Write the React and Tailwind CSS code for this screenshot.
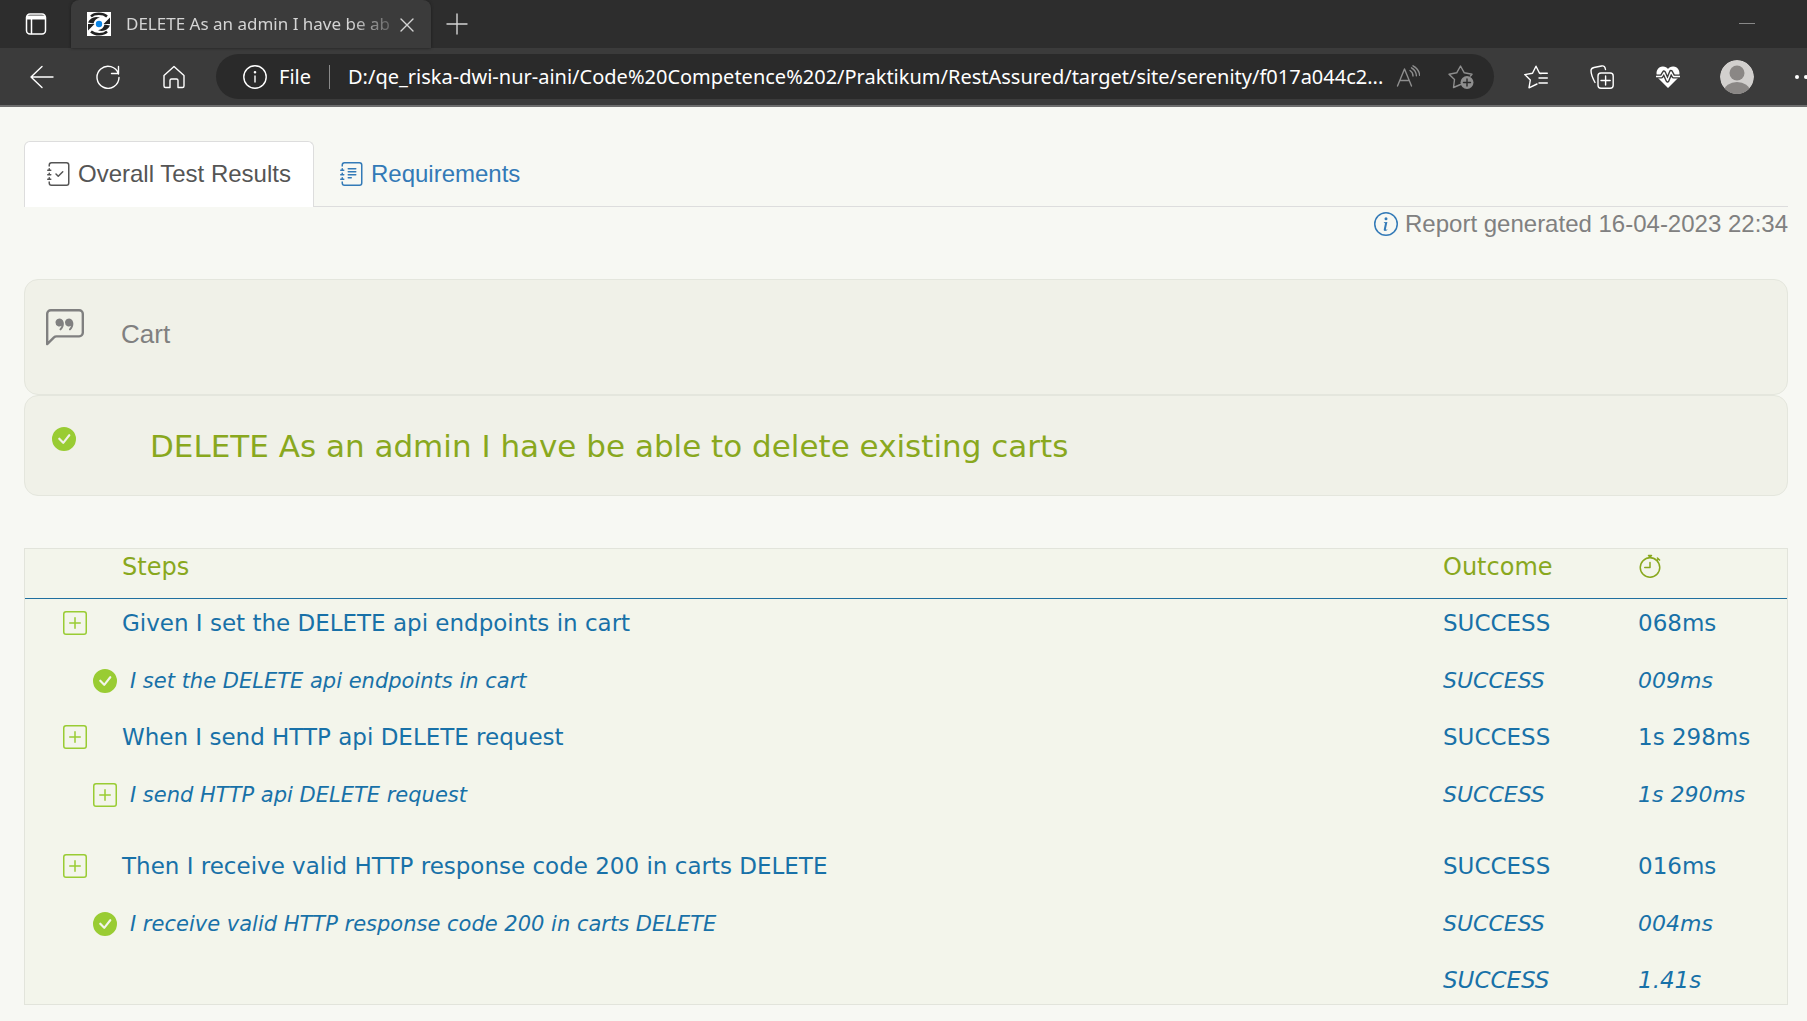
import React from "react";
import {
  BsJournalCheck,
  BsJournalText,
  BsInfoCircle,
  BsChatLeftQuote,
  BsCheckCircleFill,
  BsPlusSquare,
  BsStopwatch,
} from "react-icons/bs";

const steps = [
  { icon: "plus", text: "Given I set the DELETE api endpoints in cart", time: "068ms", height: "h-[58px]" },
  { icon: "check", nested: true, text: "I set the DELETE api endpoints in cart", time: "009ms", height: "h-[56px]" },
  { icon: "plus", text: "When I send HTTP api DELETE request", time: "1s 298ms", height: "h-[58px]" },
  { icon: "plus", nested: true, text: "I send HTTP api DELETE request", time: "1s 290ms", height: "h-[71px]" },
  { icon: "plus", text: "Then I receive valid HTTP response code 200 in carts DELETE", time: "016ms", height: "h-[58px]" },
  { icon: "check", nested: true, text: "I receive valid HTTP response code 200 in carts DELETE", time: "004ms", height: "h-[56px]" },
];

function Line({ children, className = "size-6", width = 1.4, ...rest }) {
  return (
    <svg
      viewBox="0 0 24 24"
      className={className}
      fill="none"
      stroke="currentColor"
      strokeWidth={width}
      strokeLinecap="round"
      strokeLinejoin="round"
      aria-hidden="true"
      {...rest}
    >
      {children}
    </svg>
  );
}

function Favicon() {
  return (
    <svg viewBox="0 0 24 24" className="size-6 shrink-0" aria-hidden="true">
      <rect width="24" height="24" fill="#fff" />
      <path d="M4 4.500C7.500 .8 16 .8 20 4.500" fill="none" stroke="#222" strokeWidth="2.400" />
      <path d="M20 19.500C16.500 23.200 8 23.200 4 19.500" fill="none" stroke="#222" strokeWidth="2.400" />
      <path d="M1 10.500C3 6 8 3.800 13 5.800C9.500 6.300 7.500 8 6.500 11.500z" fill="#222" />
      <path d="M23 13.500C21 18 16 20.200 11 18.200C14.500 17.700 16.500 16 17.500 12.500z" fill="#222" />
      <path d="M23 5.500V12h-6.500zM1 18.500V12h6.500z" fill="#222" />
      <circle cx="12" cy="12" r="3.200" fill="#0b84e5" />
    </svg>
  );
}

function StatusIcon({ kind }) {
  if (kind === "check") return <BsCheckCircleFill className="size-6 shrink-0 text-[#99cc33]" title="Success" />;
  return (
    <button type="button" aria-label="Expand step" className="block shrink-0 text-[#99cc33]">
      <BsPlusSquare className="size-6" />
    </button>
  );
}

function TabStrip() {
  return (
    <div className="flex h-12 items-stretch bg-[#2d2d2d] text-[#d4d4d4]">
      <button type="button" aria-label="Tab actions" className="flex w-[71px] shrink-0 items-center justify-center text-white">
        <Line width={1.5}>
          <rect x="2.500" y="2" width="19" height="20" rx="3.500" />
          <path d="M3 3.500h18V7.500H3z" fill="currentColor" stroke="none" />
          <path d="M7.500 7.500v14" />
        </Line>
      </button>
      <div className="flex w-[360px] shrink-0 items-center rounded-t-lg bg-[#3b3b3b] pl-4 pr-3 shadow-[0_0_3px_#1c1c1c]">
        <Favicon />
        <span className="ml-[15px] whitespace-nowrap text-[17px] leading-6 [mask-image:linear-gradient(to_right,#000_85%,#0004)]">
          DELETE As an admin I have be ab
        </span>
        <button type="button" aria-label="Close tab" className="ml-auto">
          <Line>
            <path d="M6 7l12 12M18 7L6 19" />
          </Line>
        </button>
      </div>
      <button type="button" aria-label="New tab" className="flex w-13 items-center justify-center">
        <Line>
          <path d="M2 12h20M12 2v20" />
        </Line>
      </button>
      <button type="button" aria-label="Minimize" className="ml-auto mr-[52px] flex items-center">
        <svg viewBox="0 0 16 2" className="h-0.5 w-4" aria-hidden="true">
          <path d="M0 .5h16" stroke="#888" />
        </svg>
      </button>
    </div>
  );
}

function Toolbar() {
  return (
    <div className="flex h-[59px] items-center overflow-hidden border-b-2 border-[#6d6d6d] bg-[#3b3b3b] pl-[30px] text-white">
      <nav aria-label="Browser" className="mr-[30px] flex shrink-0 items-center gap-[42px]">
        <button type="button" aria-label="Back">
          <Line>
            <path d="M23 12H1M12 1.500L1 12l11 10.500" />
          </Line>
        </button>
        <button type="button" aria-label="Refresh">
          <Line>
            <path d="M22.500 9A11 11 0 1 0 23 12.500M22.500 1.500v7h-7" />
          </Line>
        </button>
        <button type="button" aria-label="Home">
          <Line>
            <path d="M2 10.500L12 1.500l10 9V21a1.500 1.500 0 0 1-1.500 1.500H16V15.500a1.500 1.500 0 0 0-1.500-1.500h-5A1.500 1.500 0 0 0 8 15.500v7H3.500A1.500 1.500 0 0 1 2 21z" />
          </Line>
        </button>
      </nav>
      <div className="flex h-[45px] min-w-0 flex-1 items-center rounded-full bg-[#2a2a2a] pl-[27px] pr-5">
        <Line className="size-6 shrink-0">
          <circle cx="12" cy="12" r="11.200" />
          <path d="M12 11v6" />
          <circle cx="12" cy="7.300" r=".6" fill="currentColor" />
        </Line>
        <span className="ml-3 text-[20px] leading-6">File</span>
        <span className="mx-[18px] h-6 w-px shrink-0 bg-[#8a8a8a]" />
        <input
          aria-label="Address"
          readOnly
          value="D:/qe_riska-dwi-nur-aini/Code%20Competence%202/Praktikum/RestAssured/target/site/serenity/f017a044c2..."
          className="min-w-0 flex-1 bg-transparent text-[20px] leading-6 outline-none"
        />
        <div className="ml-2 flex shrink-0 items-center gap-[28px] text-[#8e8e8e]">
          <button type="button" aria-label="Read aloud">
            <Line>
              <path d="M1.500 21L8.500 4L15.500 21M4 15.500h9M14 5.500c2 1.200 3 3 3 5.500M15.500 2.800c3 1.700 4.700 4.200 4.900 8M17 .8c3.800 2 6.300 5 6.600 9.500" />
            </Line>
          </button>
          <button type="button" aria-label="Add to favorites">
            <Line className="h-6 w-[26px]" viewBox="0 0 26 24">
              <path d="M12.500 19.500L5.500 22.500L6.500 14.500L1 9.200L8.700 7.800L12.500 1L16.300 7.800L24 9.200L22.500 11" />
              <circle cx="19" cy="17.500" r="6.500" fill="currentColor" stroke="none" />
              <path d="M19 14v7M15.500 17.500h7" stroke="#2a2a2a" />
            </Line>
          </button>
        </div>
      </div>
      <div className="-mr-[11px] ml-[30px] flex shrink-0 items-center gap-[42px]">
        <button type="button" aria-label="Favorites">
          <Line>
            <path d="M13 19L5 22.800L6.300 15L.8 9.600L8.500 8.300L12 1.200L15.500 8.300L17 8.600M16 8.300h7.300M15 13h8.300M15 18h8.300" />
          </Line>
        </button>
        <button type="button" aria-label="Collections">
          <Line>
            <rect x="8" y="8" width="15.200" height="15.200" rx="3" />
            <path d="M15.600 11v9M11 15.500h9.200M5 17.500C2 12 1 8 1 5.500C1 3.500 2 3 4 2.500L11.500 1C14 .5 15 1.500 15.500 4.500" />
          </Line>
        </button>
        <button type="button" aria-label="Browser essentials">
          <Line>
            <path d="M12 23L1.500 12.500C-.5 9 .3 2 6.500 1.500C9 1.300 11 2.500 12 4C13 2.500 15 1.300 17.500 1.500C23.700 2 24.500 9 22.500 12.500z" fill="currentColor" stroke="none" />
            <path d="M-1 11.500h6.500L8 7.500l3.500 8L15 7l2.500 4.500H25" stroke="#3b3b3b" strokeWidth="4.200" />
            <path d="M0 11.500h5.500L8 7.500l3.500 8L15 7l2.500 4.500H24" />
          </Line>
        </button>
        <button type="button" aria-label="Profile" className="-mx-0.5">
          <svg viewBox="0 0 34 34" className="size-[34px] rounded-full" aria-hidden="true">
            <circle cx="17" cy="17" r="17" fill="#d2d0ce" />
            <circle cx="17" cy="13" r="7.500" fill="#8a8785" />
            <ellipse cx="17" cy="31" rx="13" ry="9" fill="#8a8785" />
          </svg>
        </button>
        <button type="button" aria-label="Settings and more">
          <svg viewBox="0 0 24 24" className="size-6" fill="currentColor" aria-hidden="true">
            <circle cx="3" cy="12" r="2" />
            <circle cx="12" cy="12" r="2" />
            <circle cx="21" cy="12" r="2" />
          </svg>
        </button>
      </div>
    </div>
  );
}

export default function App() {
  return (
    <div className="min-h-screen bg-[#f7f8f3]">
      <header className="font-['Noto_Sans','Open_Sans',sans-serif]">
        <TabStrip />
        <Toolbar />
      </header>

      <main className="pl-6 pr-[19px] pt-[34px] font-['Liberation_Sans',Arial,sans-serif] text-[24px] leading-8">
        <nav aria-label="Report" className="flex border-b border-[#dddddd]">
          <a
            href="#results"
            className="-mb-px flex h-[66px] items-center gap-[7px] rounded-t-md border border-b-0 border-[#dddddd] bg-white px-[22px] pb-0.5 text-[#555555]"
          >
            <BsJournalCheck className="size-6" />
            Overall Test Results
          </a>
          <a href="#requirements" className="flex h-[65px] items-center gap-[7px] px-[26px] text-[#337ab7]">
            <BsJournalText className="size-6" />
            Requirements
          </a>
        </nav>

        <p className="flex items-center justify-end gap-[7px] pt-px text-[#808080]">
          <BsInfoCircle className="size-6 text-[#337ab7]" />
          Report generated 16-04-2023 22:34
        </p>

        <section className="mt-[39px] flex h-[116px] items-start rounded-[14px] border border-[#e4e6dd] bg-[#f0f1e8] pl-[21px] pt-[29px] text-[#808080]">
          <BsChatLeftQuote className="size-[38px]" />
          <p className="ml-[37px] mt-[7px] text-[26px] leading-9">Cart</p>
        </section>
        <section className="flex h-[101px] items-start rounded-[14px] border border-[#e4e6dd] bg-[#f0f1e8] pl-[27px] pt-[31px]">
          <BsCheckCircleFill className="size-6 text-[#99cc33]" />
          <h1 className="ml-[74px] font-['DejaVu_Sans',Verdana,sans-serif] text-[31px] leading-[38px] text-[#89a81e]">
            DELETE As an admin I have be able to delete existing carts
          </h1>
        </section>

        <table className="mt-[52px] w-full table-fixed border-separate border-spacing-0 border border-[#e2e4db] bg-[#f3f5eb] text-left font-['DejaVu_Sans',Verdana,sans-serif] text-[23px] text-[#1871a8]">
          <colgroup>
            <col className="w-[97px]" />
            <col />
            <col className="w-[195px]" />
            <col className="w-[149px]" />
          </colgroup>
          <thead>
            <tr className="h-[50px] align-top text-[24px] text-[#89a81e] *:border-b *:border-[#1f6f9f] *:pt-0.5 *:font-normal">
              <td />
              <th scope="col">Steps</th>
              <th scope="col">Outcome</th>
              <th scope="col" aria-label="Duration">
                <BsStopwatch className="mt-[3px] size-6" />
              </th>
            </tr>
          </thead>
          <tbody>
            {steps.map((s) =>
              s.nested ? (
                <tr key={s.text} className={`${s.height} align-top text-[22px] italic *:pt-2`}>
                  <td colSpan={2}>
                    <div className="flex items-center gap-[13px] pl-[68px] text-[21px]">
                      <StatusIcon kind={s.icon} />
                      {s.text}
                    </div>
                  </td>
                  <td>SUCCESS</td>
                  <td>{s.time}</td>
                </tr>
              ) : (
                <tr key={s.text} className={`${s.height} align-top *:pt-2`}>
                  <td>
                    <div className="flex h-8 items-center pl-[38px]">
                      <StatusIcon kind={s.icon} />
                    </div>
                  </td>
                  <td>{s.text}</td>
                  <td>SUCCESS</td>
                  <td>{s.time}</td>
                </tr>
              )
            )}
            <tr className="h-12 align-top italic *:pt-2">
              <td colSpan={2} />
              <td>SUCCESS</td>
              <td>1.41s</td>
            </tr>
          </tbody>
        </table>
      </main>
    </div>
  );
}
